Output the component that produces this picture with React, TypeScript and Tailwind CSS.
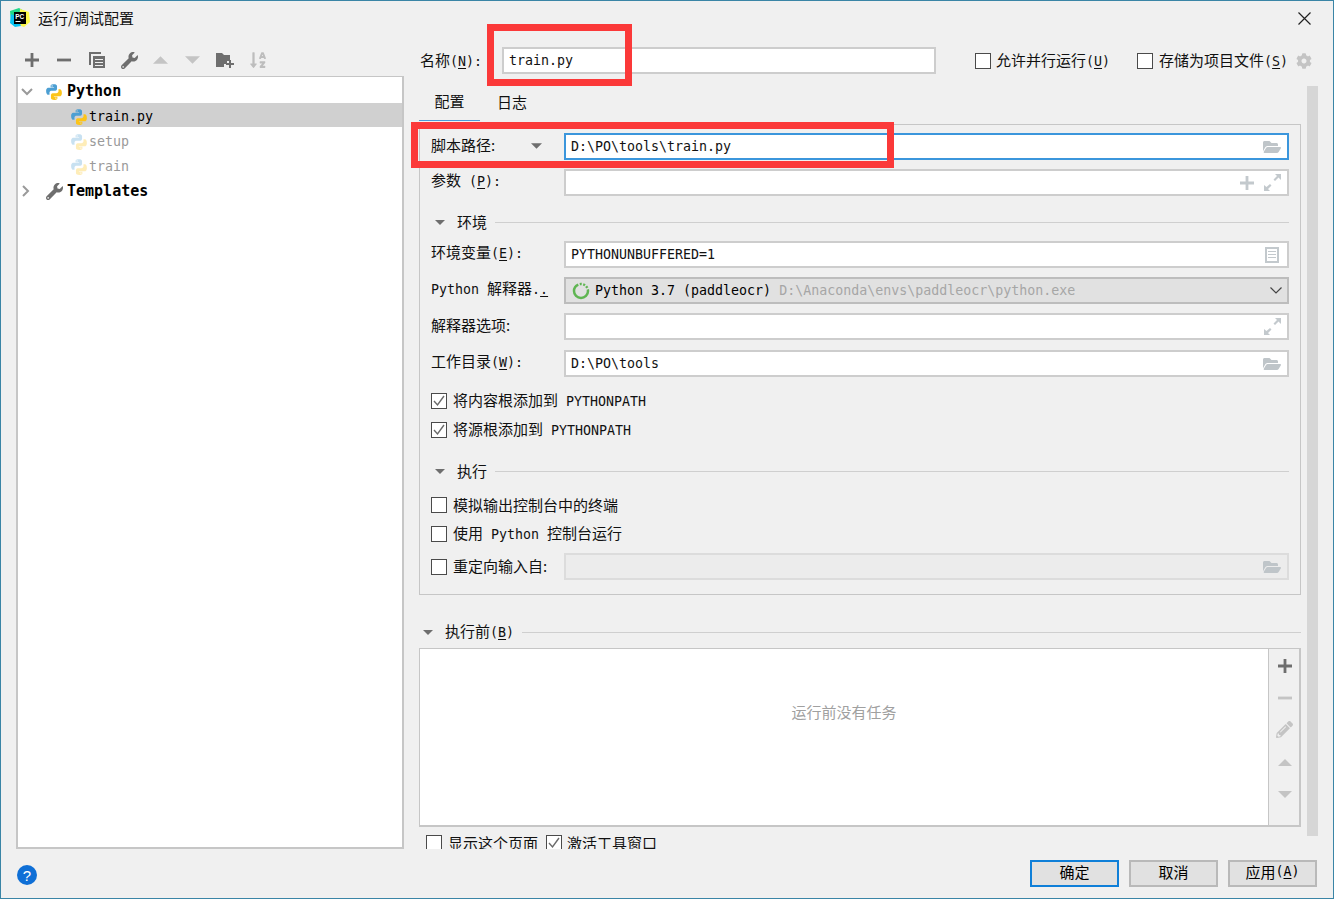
import React from "react";
import { FaCog, FaFolderOpen, FaPencilAlt, FaSortAlphaDown, FaWrench } from "react-icons/fa";

const cjk = "font-['Noto_Sans_CJK_SC','Noto_Sans',sans-serif]";

// latin text in the dialog is monospaced and a bit smaller than the cjk text
function M({ children, className = "" }: { children: React.ReactNode; className?: string }) {
  return <span className={"font-['DejaVu_Sans_Mono',monospace] text-[13.3px] " + className}>{children}</span>;
}

function Key({ k, suffix = "" }: { k: string; suffix?: string }) {
  return (
    <M>
      (<span className="underline underline-offset-2">{k}</span>){suffix}
    </M>
  );
}

function PythonIcon({ faded = false, size = 18 }: { faded?: boolean; size?: number }) {
  return (
    <svg width={size} height={size} viewBox="0 0 16 16" className={faded ? "shrink-0 opacity-30" : "shrink-0"}>
      <path
        fill="#4c9fd3"
        d="M7.9 1C4.9 1 5 2.3 5 2.3V3.700h3.100v.5H3.200S1 3.900 1 7.200s1.900 3.200 1.900 3.200H4V8.800s-.1-1.900 1.900-1.900h3s1.800 0 1.800-1.800V2.800S11 1 7.900 1zM6.300 2a.6.6 0 1 1 0 1.200.6.6 0 0 1 0-1.200z"
      />
      <path
        fill="#fcc419"
        d="M8.100 15c3 0 2.900-1.300 2.900-1.300v-1.400H7.900v-.5h4.900s2.200.3 2.200-3-1.900-3.200-1.900-3.200H12v1.600s.1 1.900-1.900 1.900h-3s-1.800 0-1.800 1.800v2.300S5 15 8.100 15zm1.600-1a.6.6 0 1 1 0-1.200.6.6 0 0 1 0 1.200z"
      />
    </svg>
  );
}

function PyCharmLogo() {
  return (
    <svg width="20" height="20" viewBox="0 0 20 20" className="shrink-0">
      <path fill="#21d789" d="M0 3 9 0l5 3-6 8-7 3z" />
      <path fill="#fcf84a" d="m10 1 9 3 1 10-6 5-5-2z" />
      <path fill="#07c3f2" d="M1 6 0 15l5 4 6-1-4-9z" />
      <rect x="4" y="4" width="12" height="12" fill="#000" />
      <rect x="5.500" y="13" width="5" height="1" fill="#fff" />
      <text x="5.200" y="10.500" fill="#fff" fontSize="6.500" fontWeight="700" fontFamily="'Liberation Sans',sans-serif">
        PC
      </text>
    </svg>
  );
}

function Triangle({ up = false, color = "#6e6e6e", w = 12, h = 6 }: { up?: boolean; color?: string; w?: number; h?: number }) {
  return (
    <svg width={w} height={h} viewBox="0 0 12 6" className="shrink-0">
      <path fill={color} d={up ? "M6 0l6 6H0z" : "M0 0h12L6 6z"} />
    </svg>
  );
}

function PlusIcon({ color = "#6e6e6e" }: { color?: string }) {
  return (
    <svg width="14" height="14" viewBox="0 0 14 14">
      <path fill={color} d="M5.600 0h2.800v5.600H14v2.800H8.400V14H5.600V8.400H0V5.600h5.600z" />
    </svg>
  );
}

function MinusIcon({ color = "#6e6e6e" }: { color?: string }) {
  return (
    <svg width="14" height="14" viewBox="0 0 14 14">
      <rect y="5.600" width="14" height="2.800" fill={color} />
    </svg>
  );
}

function ExpandIcon() {
  return (
    <svg width="17" height="17" viewBox="0 0 17 17">
      <path fill="#c3c9cd" d="M0 11v6h6l-2-2 3.500-3.500-1.500-1.500L2.500 13zM17 6V0h-6l2 2-3.500 3.500L11 7l3.500-3.500z" />
    </svg>
  );
}

function FolderIcon() {
  return <FaFolderOpen size={18} color="#bfc5c9" />;
}

function Checkbox({ checked = false }: { checked?: boolean }) {
  return (
    <span className="flex h-[16px] w-[16px] shrink-0 items-center justify-center border border-[#4a4a4a] bg-white">
      {checked && (
        <svg width="12" height="12" viewBox="0 0 12 12">
          <path d="M1 6l3.500 4L11 1" fill="none" stroke="#6a6a6a" strokeWidth="1.400" />
        </svg>
      )}
    </span>
  );
}

function Input({ children, icons, focused = false }: { children?: React.ReactNode; icons?: React.ReactNode; focused?: boolean }) {
  return (
    <div
      className={
        "flex h-[27px] w-[725px] items-center justify-between border-2 bg-white pl-[5px] pr-[6px] " +
        (focused ? "border-[#3b96dc]" : "border-[#cdcdcd]")
      }
    >
      <div className="flex items-center whitespace-nowrap">{children}</div>
      {icons && <div className="flex items-center gap-[10px]">{icons}</div>}
    </div>
  );
}

function Field({ label, children, className = "" }: { label: React.ReactNode; children: React.ReactNode; className?: string }) {
  return (
    <div className={"flex items-center " + className}>
      <div className="w-[133px] whitespace-nowrap pb-[4px]">{label}</div>
      {children}
    </div>
  );
}

function SectionHead({ title, className = "" }: { title: React.ReactNode; className?: string }) {
  return (
    <div className={"flex h-[20px] items-center " + className}>
      <Triangle w={10} h={5} />
      <div className="ml-[12px] whitespace-nowrap pb-[2px]">{title}</div>
      <div className="ml-[8px] h-0 flex-1 border-t border-[#cfcfcf]" />
    </div>
  );
}

function CheckRow({ checked = false, children, className = "" }: { checked?: boolean; children: React.ReactNode; className?: string }) {
  return (
    <div className={"flex h-[22px] items-center gap-[6px] whitespace-nowrap " + className}>
      <Checkbox checked={checked} />
      <span className="pb-[2px]">{children}</span>
    </div>
  );
}

function TreeRow({
  icon,
  children,
  arrow,
  selected = false,
  pad,
  className = "",
}: {
  icon: React.ReactNode;
  children: React.ReactNode;
  arrow?: React.ReactNode;
  selected?: boolean;
  pad: string;
  className?: string;
}) {
  return (
    <div className={"flex items-center " + (selected ? "h-[24px] bg-[#d0d0d0] pt-[3px] " : "h-[25px] ") + className}>
      <div className={"flex shrink-0 items-center " + pad}>
        {arrow}
        {icon}
      </div>
      {children}
    </div>
  );
}

function DialogButton({ children, primary = false }: { children: React.ReactNode; primary?: boolean }) {
  return (
    <button
      className={
        "flex h-[27px] w-[89px] items-center justify-center bg-[#e1e1e1] pb-[4px] text-[15px] text-black " +
        (primary ? "border-2 border-[#0f7fd8]" : "border-2 border-[#b9b9b9]")
      }
    >
      {children}
    </button>
  );
}

export default function App() {
  return (
    <div className={"relative flex h-[899px] w-[1334px] flex-col overflow-hidden border border-[#3a85a6] bg-[#f0f0f0] text-[15px] leading-none text-[#111] " + cjk}>
      {/* title bar */}
      <div className="flex h-[36px] shrink-0 items-center pb-[2px] pl-[9px] pr-[22px]">
        <PyCharmLogo />
        <span className="ml-[8px] pb-[2px]">运行/调试配置</span>
        <svg width="13" height="13" viewBox="0 0 13 13" className="ml-auto">
          <path d="M.500.500l12 12M12.500.500l-12 12" stroke="#222" strokeWidth="1.200" />
        </svg>
      </div>

      <div className="flex h-[812px] shrink-0">
        {/* left column */}
        <div className="ml-[15px] flex w-[388px] shrink-0 flex-col">
          <div className="flex h-[39px] items-center pl-[9px] pt-[7px]">
            <div className="flex w-[32px]"><PlusIcon /></div>
            <div className="flex w-[32px]"><MinusIcon /></div>
            <svg width="16" height="16" viewBox="0 0 16 16" className="mr-[16px]">
              <path fill="#6e6e6e" d="M0 0h12v2H2v11H0zM4 4h12v12H4zm2 3v1h8V7zm0 3v1h8v-1zm0 3v1h8v-1z" />
            </svg>
            <FaWrench size={17} color="#6e6e6e" className="mr-[15px]" />
            <div className="mr-[17px] flex"><Triangle up color="#c4c4c4" w={15} h={8} /></div>
            <div className="mr-[16px] flex"><Triangle color="#c4c4c4" w={15} h={8} /></div>
            <svg width="18" height="16" viewBox="0 0 18 16" className="mr-[15px]">
              <path fill="#6e6e6e" d="M0 1h6l2 2h6v6h-3v3H8v3H0z" />
              <path fill="#6e6e6e" d="M13 10h2v3h3v2h-3v3h-2v-3h-3v-2h3z" transform="translate(0 -2)" />
            </svg>
            <FaSortAlphaDown size={18} color="#bdbdbd" />
          </div>
          <div className="h-[773px] border-2 border-t border-[#c6c6c6] bg-white pt-[1px] font-['DejaVu_Sans_Mono',monospace] text-[13.3px]">
            <TreeRow
              className="pt-[2px]"
              pad="w-[49px]"
              arrow={
                <svg width="12" height="8" viewBox="0 0 12 8" className="ml-[3px] mr-[12px]">
                  <path d="M1 1l5 5 5-5" fill="none" stroke="#9a9a9a" strokeWidth="2" />
                </svg>
              }
              icon={<PythonIcon />}
            >
              <span className="text-[15px] font-bold text-black">Python</span>
            </TreeRow>
            <TreeRow pad="w-[71px] pl-[52px]" icon={<PythonIcon />} selected>
              <span className="text-black">train.py</span>
            </TreeRow>
            <TreeRow className="pt-[4px]" pad="w-[71px] pl-[52px]" icon={<PythonIcon faded />}>
              <span className="text-[#9a9a9a]">setup</span>
            </TreeRow>
            <TreeRow className="pt-[4px]" pad="w-[71px] pl-[52px]" icon={<PythonIcon faded />}>
              <span className="text-[#9a9a9a]">train</span>
            </TreeRow>
            <TreeRow
              className="pt-[3px]"
              pad="w-[49px]"
              arrow={
                <svg width="8" height="12" viewBox="0 0 8 12" className="ml-[4px] mr-[16px]">
                  <path d="M1 1l5 5-5 5" fill="none" stroke="#9a9a9a" strokeWidth="2" />
                </svg>
              }
              icon={<FaWrench size={17} color="#6e6e6e" />}
            >
              <span className="text-[15px] font-bold text-black">Templates</span>
            </TreeRow>
          </div>
        </div>

        {/* right column */}
        <div className="ml-[15px] flex w-[899px] shrink-0 flex-col">
          <div className="mt-[10px] flex h-[27px] items-center whitespace-nowrap">
            <div className="w-[83px] pb-[1px] pl-[1px]">
              名称<Key k="N" suffix=":" />
            </div>
            <div className="flex h-[27px] w-[434px] items-center border-2 border-[#cdcdcd] bg-white pl-[5px]">
              <M>train.py</M>
            </div>
            <div className="ml-[39px]"><Checkbox /></div>
            <span className="ml-[5px] pb-[1px]">允许并行运行<Key k="U" /></span>
            <div className="ml-[27px]"><Checkbox /></div>
            <span className="ml-[6px] pb-[1px]">存储为项目文件<Key k="S" /></span>
            <FaCog size={16} color="#c4c4c4" className="ml-[8px]" />
          </div>

          <div className="mt-[12px] flex h-[763px]">
            <div className="flex w-[882px] shrink-0 flex-col">
              {/* tabs */}
              <div className="flex h-[38px] shrink-0">
                <div className="flex h-[35px] w-[61px] items-center justify-center border-b border-[#4a9bd8] pb-[5px]">配置</div>
                <div className="flex h-[35px] w-[64px] items-center justify-center pb-[5px]">日志</div>
              </div>

              {/* configuration panel */}
              <div className="flex h-[471px] shrink-0 flex-col border border-[#c6c6c6] pl-[11px] pr-[11px]">
                <Field className="mt-[8px]" label={<div className="flex items-center">脚本路径:<span className="ml-[36px] flex pt-[3px]"><Triangle w={11} h={6} /></span></div>}>
                  <Input focused icons={<FolderIcon />}>
                    <M>D:\PO\tools\train.py</M>
                  </Input>
                </Field>
                <Field className="mt-[9px]" label={<>参数<M>&nbsp;</M><Key k="P" suffix=":" /></>}>
                  <Input icons={<><PlusIcon color="#c3c9cd" /><ExpandIcon /></>} />
                </Field>

                <SectionHead className="mt-[16px] pl-[4px]" title="环境" />

                <Field className="mt-[9px]" label={<>环境变量<Key k="E" suffix=":" /></>}>
                  <Input icons={
                    <svg width="14" height="16" viewBox="0 0 14 16" className="mr-[2px]">
                      <path fill="#c3c9cd" d="M0 0h14v16H0zm2 2v12h10V2zm1 2h8v1H3zm0 3h8v1H3zm0 3h8v1H3z" />
                    </svg>
                  }>
                    <M>PYTHONUNBUFFERED=1</M>
                  </Input>
                </Field>
                <Field className="mt-[9px]" label={<><M>Python&nbsp;</M>解释器<M>.</M><M className="underline underline-offset-2">.</M></>}>
                  <div className="flex h-[27px] w-[725px] items-center border-2 border-[#bdbdbd] bg-[#e1e1e1] pl-[6px] pr-[5px]">
                    <svg width="18" height="18" viewBox="0 0 18 18" className="mr-[5px] shrink-0">
                      <circle cx="9" cy="9" r="7" fill="none" stroke="#5fb552" strokeWidth="2.500" strokeDasharray="30 1.500 2 1.500 2 1.500 2 1.500" />
                    </svg>
                    <M className="whitespace-nowrap text-black">Python 3.7 (paddleocr)</M>
                    <M className="ml-[8px] whitespace-nowrap text-[#a6a6a6]">D:\Anaconda\envs\paddleocr\python.exe</M>
                    <svg width="12" height="7" viewBox="0 0 12 7" className="ml-auto">
                      <path d="M.500.500L6 6l5.500-5.500" fill="none" stroke="#444" strokeWidth="1.200" />
                    </svg>
                  </div>
                </Field>
                <Field className="mt-[9px]" label="解释器选项:">
                  <Input icons={<ExpandIcon />} />
                </Field>
                <Field className="mt-[10px]" label={<>工作目录<Key k="W" suffix=":" /></>}>
                  <Input icons={<FolderIcon />}>
                    <M>D:\PO\tools</M>
                  </Input>
                </Field>

                <CheckRow checked className="mt-[13px]">将内容根添加到<M>&nbsp;PYTHONPATH</M></CheckRow>
                <CheckRow checked className="mt-[7px]">将源根添加到<M>&nbsp;PYTHONPATH</M></CheckRow>

                <SectionHead className="mt-[20px] pl-[4px]" title="执行" />

                <CheckRow className="mt-[13px]">模拟输出控制台中的终端</CheckRow>
                <CheckRow className="mt-[7px]">使用<M>&nbsp;Python&nbsp;</M>控制台运行</CheckRow>
                <div className="mt-[8px] flex items-center">
                  <div className="flex w-[133px] items-center gap-[6px] whitespace-nowrap">
                    <Checkbox />
                    <span className="pb-[3px]">重定向输入自:</span>
                  </div>
                  <div className="flex h-[27px] w-[725px] items-center justify-end border-2 border-[#dcdcdc] bg-[#ececec] pr-[6px]">
                    <FolderIcon />
                  </div>
                </div>
              </div>

              {/* before launch */}
              <SectionHead className="mt-[27px] pl-[4px]" title={<>执行前<Key k="B" /></>} />
              <div className="mt-[6px] flex h-[179px] shrink-0 border-2 border-l border-t border-[#c6c6c6]">
                <div className="flex flex-1 items-center justify-center bg-white pb-[52px] text-[#a0a0a0]">运行前没有任务</div>
                <div className="flex w-[31px] flex-col items-center border-l border-[#c6c6c6] pl-[1px] pt-[10px]">
                  <PlusIcon />
                  <div className="mt-[18px] flex"><MinusIcon color="#c4c4c4" /></div>
                  <FaPencilAlt size={17} color="#c4c4c4" className="mt-[16px]" />
                  <div className="mt-[21px] flex"><Triangle up color="#c4c4c4" w={14} h={7} /></div>
                  <div className="mt-[25px] flex"><Triangle color="#c4c4c4" w={14} h={7} /></div>
                </div>
              </div>

              {/* row cut off by the end of the scroll pane */}
              <div className="mt-[8px] flex h-[14px] items-start overflow-hidden whitespace-nowrap pl-[7px]">
                <Checkbox />
                <span className="ml-[6px]">显示这个页面</span>
                <span className="ml-[8px] flex"><Checkbox checked /></span>
                <span className="ml-[5px]">激活工具窗口</span>
              </div>
            </div>
            {/* scrollbar */}
            <div className="ml-[6px] h-[750px] w-[11px] shrink-0 bg-[#d6d6d6]" />
          </div>
        </div>
      </div>

      {/* footer */}
      <div className="flex flex-1 items-start pl-[16px] pr-[16px] pt-[11px]">
        <div className="mt-[5px] flex h-[20px] w-[20px] items-center justify-center rounded-full bg-[#0f6fd6] font-['Liberation_Sans',sans-serif] text-[15px] text-white">?</div>
        <div className="ml-auto flex gap-[10px]">
          <DialogButton primary>确定</DialogButton>
          <DialogButton>取消</DialogButton>
          <DialogButton>应用<Key k="A" /></DialogButton>
        </div>
      </div>

      {/* red annotation boxes */}
      <div className="absolute left-[486px] top-[23px] h-[62px] w-[145px] border-[7px] border-[#fb3939]" />
      <div className="absolute left-[410px] top-[121px] h-[46px] w-[483px] border-[7px] border-[#fb3939]" />
    </div>
  );
}
